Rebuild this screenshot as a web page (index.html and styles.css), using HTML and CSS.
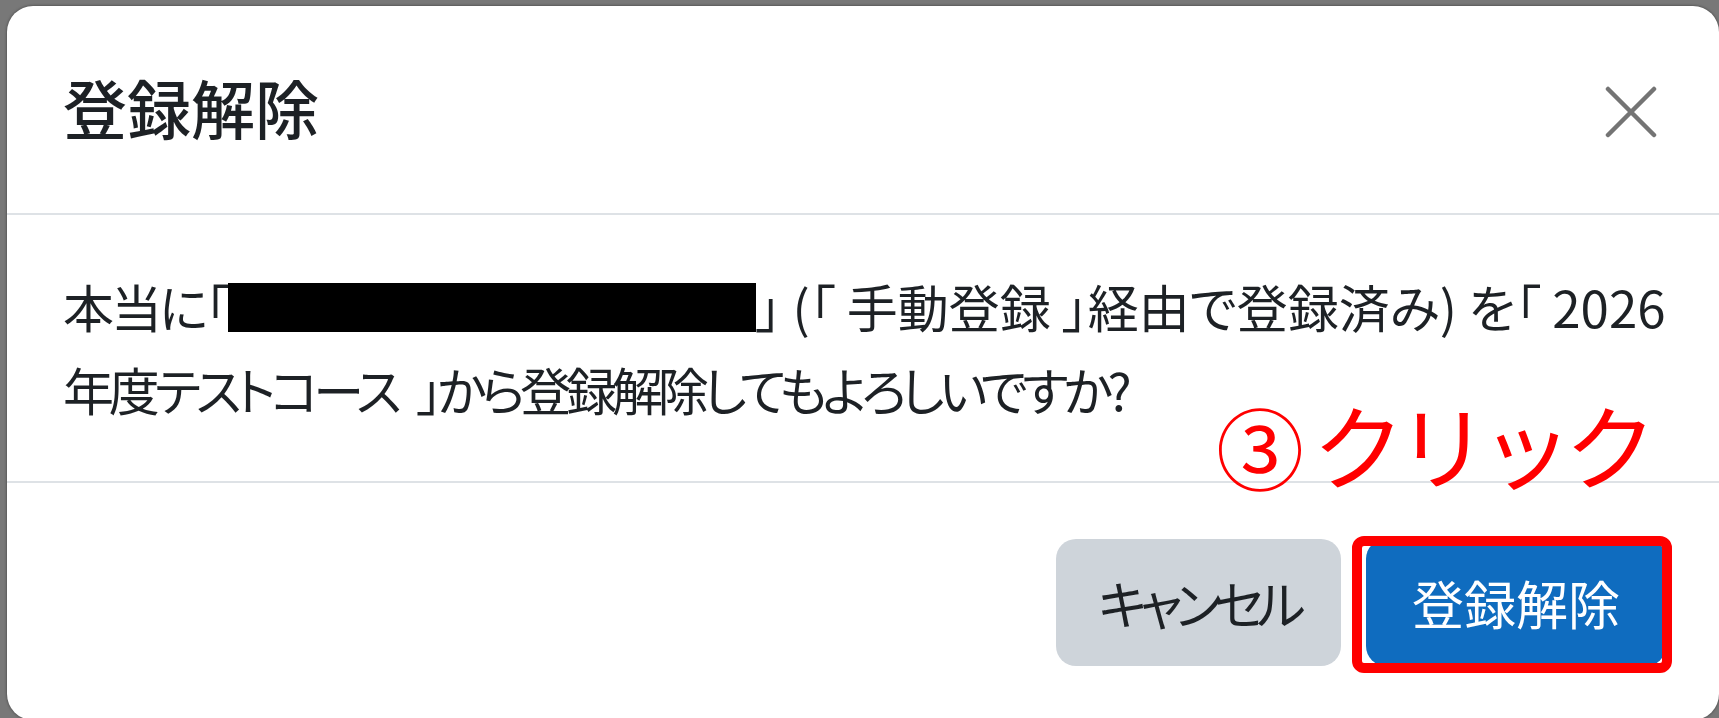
FILE: index.html
```html
<!DOCTYPE html>
<html lang="ja">

<head>
    <meta charset="UTF-8">
    <meta name="viewport" content="width=device-width, initial-scale=1.0">
    <title>登録解除</title>
    <link rel="stylesheet" href="styles.css">
</head>

<body>
    <div class="modal">
        <div class="modal-header">
            <h5 class="modal-title">登録解除</h5>
            <button type="button" class="btn-close" aria-label="閉じる">
                <svg width="52" height="52" viewBox="0 0 52 52">
                    <path d="M3 3 L49 49 M49 3 L3 49" stroke="#747474" stroke-width="4.5" stroke-linecap="round" fill="none" />
                </svg>
            </button>
        </div>

        <div class="modal-body">
            <p><span class="narrow">本当に「</span><span class="redact"></span>」 (「 手動登録 」経由で登録済み) を「 2026<br><span class="condensed">年度テストコース<span class="quote-gap"></span>」から登録解除してもよろしいですか?</span></p>
        </div>

        <div class="modal-footer">
            <button type="button" class="btn btn-secondary">キャンセル</button>
            <button type="button" class="btn btn-primary">登録解除</button>
        </div>

        <!-- step marker over the confirm button -->
        <span class="step-label"><span class="step-num">③</span> クリック</span>
        <span class="step-frame"></span>
    </div>
</body>

</html>
```

FILE: styles.css
```css
* {
    box-sizing: border-box;
}

body {
    margin: 0;
    padding: 6px 0 0 7px;
    background-color: #787878;
    overflow: hidden;
    font-family: "Noto Sans CJK JP", "Noto Sans", sans-serif;
    color: #1d2125;
}

.modal {
    position: relative;
    width: 1712px;
    height: 714px;
    background-color: #ffffff;
    border-radius: 26px;
    box-shadow: 0 0 3px rgba(0, 0, 0, 0.5);
}

.modal-header {
    display: flex;
    align-items: center;
    height: 209px;
    padding: 0 62px 0 56px;
    border-bottom: 2px solid #dee2e6;
}

.modal-title {
    margin: -7px 0 0 0;
    font-size: 64px;
    font-weight: 500;
    line-height: 1;
}

.btn-close {
    margin: 4px 0 0 auto;
    padding: 0;
    width: 52px;
    height: 52px;
    border: none;
    background: none;
    cursor: pointer;
}

.btn-close svg {
    display: block;
}

.modal-body {
    height: 266px;
    padding: 50px 56px 0 56px;
}

.modal-body p {
    margin: 0;
    font-size: 51px;
    line-height: 83px;
    font-feature-settings: "palt";
    white-space: nowrap;
}

.narrow {
    letter-spacing: -3px;
}

.condensed {
    letter-spacing: -5.2px;
}

.quote-gap {
    display: inline-block;
    width: 20px;
}

.redact {
    display: inline-block;
    width: 528px;
    height: 49px;
    background-color: #000000;
    vertical-align: -4px;
}

.modal-footer {
    display: flex;
    justify-content: flex-end;
    gap: 25px;
    padding: 56px 53px 0 0;
    border-top: 2px solid #dee2e6;
}

.btn {
    height: 127px;
    padding: 0;
    border: none;
    border-radius: 20px;
    font-family: inherit;
    font-size: 52px;
    line-height: 1;
    font-feature-settings: "palt";
    cursor: pointer;
}

.btn-secondary {
    width: 285px;
    background-color: #ced4da;
    color: #1d2125;
    letter-spacing: -7px;
}

.btn-primary {
    width: 300px;
    background-color: #0f6cbf;
    color: #ffffff;
}

.step-label {
    position: absolute;
    left: 1209px;
    top: 391px;
    font-size: 92px;
    font-weight: 400;
    line-height: 1;
    letter-spacing: -8px;
    color: #ff0000;
    white-space: nowrap;
}

.step-num {
    font-size: 88px;
    letter-spacing: 0;
    margin-right: -4px;
}

.step-frame {
    position: absolute;
    left: 1345px;
    top: 530px;
    width: 320px;
    height: 137px;
    border: 10px solid #ff0000;
    border-radius: 12px;
}
```
